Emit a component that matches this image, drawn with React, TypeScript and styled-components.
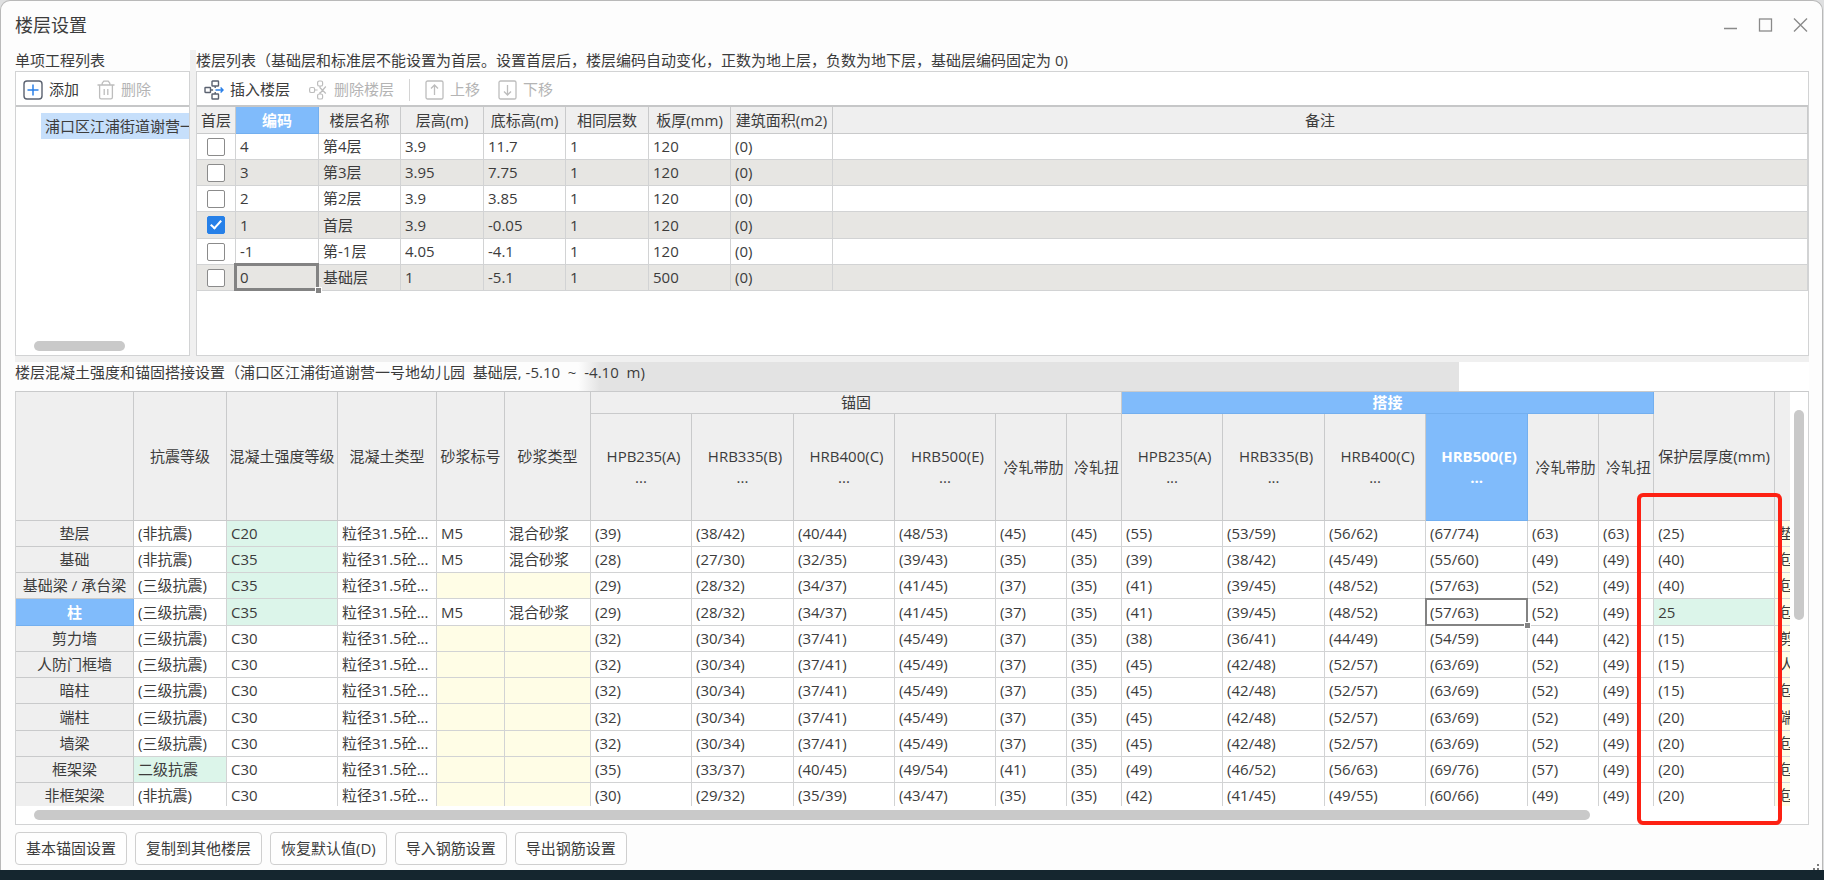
import React from "react";
import styled, { createGlobalStyle, css } from "styled-components";

const GlobalStyle = createGlobalStyle`
  *, *::before, *::after { box-sizing: border-box; }
  body {
    margin: 0;
    background: #dfe0e1;
    color: #3c3c3c;
    font: 15px/21px "Open Sans", "Noto Sans CJK SC", sans-serif;
  }
  button, input { font: inherit; color: inherit; }
`;

const line = "#d2d3d4";
const headLine = "#c9cacb";
const accent = "#80bbfb";

/* ---------- window frame ---------- */

const Screen = styled.div`
  display: flex;
  flex-direction: column;
  min-height: 100vh;
`;

const Dialog = styled.main`
  position: relative;
  flex: 1;
  display: flex;
  flex-direction: column;
  margin-right: 1px;
  padding: 0 13px 5px 14px;
  background: #fdfdfd;
  border: 1px solid #b9b9b9;
  border-bottom: 0;
  border-radius: 10px 10px 0 0;
`;

const Desktop = styled.div`
  height: 10px;
  background: #15262f;
`;

const TitleBar = styled.header`
  display: flex;
  align-items: center;
  justify-content: space-between;
  height: 49px;
`;

const Title = styled.h1`
  margin: 0;
  font-size: 18px;
  font-weight: 400;
`;

const WindowButtons = styled.div`
  display: flex;
  gap: 20px;
  padding-right: 1px;
`;

const WindowButton = styled.button`
  display: flex;
  padding: 0;
  border: 0;
  background: none;
  color: #8a8a8a;
`;

const Grip = styled.svg`
  position: absolute;
  right: 2px;
  bottom: 0;
`;

/* ---------- upper area ---------- */

const Upper = styled.section`
  display: flex;
`;

const Side = styled.div`
  width: 175px;
  flex: none;
`;

const Main = styled.div`
  flex: 1;
  min-width: 0;
`;

const Splitter = styled.div<{ $row?: boolean }>`
  flex: none;
  background: #f0f0f0;
  ${(p) => (p.$row ? "height: 6px;" : "width: 6px;")}
`;

const Caption = styled.h2`
  margin: 0;
  font-size: 15px;
  font-weight: 400;
  white-space: nowrap;
`;

const GridCaption = styled(Caption)`
  height: 29px;
  background: linear-gradient(to right, #fdfdfd 31.4%, #e3e3e3 32.6%, #e3e3e3 80.5%, #fff 80.5%);
`;

const Panel = styled.div`
  display: flex;
  flex-direction: column;
  height: 285px;
  background: #fff;
  border: 1px solid ${line};
`;

const Toolbar = styled.div`
  display: flex;
  align-items: center;
  gap: 18px;
  flex: none;
  height: 35px;
  padding: 2px 7px 0;
  border-bottom: 2px solid #c6c7c8;
`;

const ToolButton = styled.button`
  display: flex;
  align-items: center;
  gap: 6px;
  padding: 0;
  border: 0;
  background: none;
  white-space: nowrap;
  &:disabled { color: #b4b4b4; }
  svg { flex: none; }
`;

const Divider = styled.span`
  width: 1px;
  height: 22px;
  margin: 0 -3px;
  background: #d4d4d4;
`;

const Tree = styled.ul`
  flex: 1;
  margin: 0;
  padding: 6px 0 0 25px;
  list-style: none;
  overflow: hidden;
`;

const TreeItem = styled.li`
  padding-left: 4px;
  line-height: 26px;
  white-space: nowrap;
  background: #c6dffb;
`;

const Thumb = styled.div`
  background: #c9c9c9;
  border-radius: 5px;
`;

const TreeThumb = styled(Thumb)`
  width: 91px;
  height: 10px;
  margin: 0 0 4px 18px;
`;

/* ---------- tables ---------- */

const Table = styled.table`
  table-layout: fixed;
  border-collapse: separate;
  border-spacing: 0;
  white-space: nowrap;
`;

const FloorTable = styled(Table)`
  width: 100%;
`;

const RebarTable = styled(Table)`
  width: 1860px;
`;

const Col = styled.col<{ $w?: number }>`
  ${(p) => (p.$w ? `width: ${p.$w}px;` : "")}
`;

const selectedHead = css`
  background: ${accent};
  border-color: #73afef;
  color: #fff;
  font-weight: 700;
`;

const Head = styled.th<{ $on?: boolean; $h: number }>`
  height: ${(p) => p.$h}px;
  padding: 0;
  background: #efefef;
  border: solid ${headLine};
  border-width: 0 1px 1px 0;
  font-weight: 400;
  text-align: center;
  ${(p) => p.$on && selectedHead}
`;

const SubHead = styled(Head)`
  padding-left: 5px;
`;

const Dots = styled.span`
  display: block;
  margin-left: -5px;
`;

const Body = styled.tbody`
  tr { height: 26px; }
  tr:nth-child(4n) { height: 27px; }
`;

const FloorRow = styled.tr`
  &:nth-child(even) { background: #e7e6e3; }
`;

const RowHead = styled.th<{ $on?: boolean }>`
  padding: 0;
  background: #efefef;
  border: solid ${headLine};
  border-width: 0 1px 1px 0;
  font-weight: 400;
  ${(p) => p.$on && selectedHead}
`;

type Tint = "green" | "yellow" | undefined;

const Cell = styled.td<{ $tint?: Tint; $current?: number; $clip?: boolean }>`
  padding: 0 0 0 4px;
  line-height: 21px;
  border: solid ${line};
  border-width: 0 1px 1px 0;
  ${(p) => p.$clip && "overflow: hidden;"}
  ${(p) => p.$tint === "green" && "background: #dcf5ea;"}
  ${(p) => p.$tint === "yellow" && "background: #fffde6;"}
  ${(p) =>
    p.$current &&
    css`
      position: relative;
      &::before {
        content: "";
        position: absolute;
        inset: -${p.$current - 1}px -1px -1px -${p.$current - 1}px;
        border: ${p.$current}px solid #838383;
      }
      &::after {
        content: "";
        position: absolute;
        z-index: 1;
        right: -4px;
        bottom: -4px;
        width: 7px;
        height: 7px;
        background: #838383;
        border: 1px solid #fff;
      }
    `}
`;

const CheckCell = styled(Cell)`
  padding: 0;
`;

const Check = styled.input`
  appearance: none;
  display: grid;
  place-content: center;
  width: 18px;
  height: 18px;
  margin: 0 auto;
  background: #fff;
  border: 1px solid #8b8b8b;
  border-radius: 2px;
  &:checked {
    background: #2680e8;
    border-color: #2680e8;
  }
  &:checked::before {
    content: "";
    width: 6px;
    height: 11px;
    margin-bottom: 3px;
    border: solid #fff;
    border-width: 0 2px 2px 0;
    transform: rotate(42deg);
  }
`;

/* ---------- lower area ---------- */

const GridPanel = styled.section`
  position: relative;
  flex: 1 0 0;
  min-height: 434px;
  display: grid;
  grid-template: minmax(0, 1fr) 18px / minmax(0, 1fr) 18px;
  background: #fff;
  border: 1px solid ${line};
  border-top-color: ${headLine};
`;

const Viewport = styled.div`
  overflow: auto;
  scrollbar-width: none;
  height: 0;
  min-height: 100%;
`;

const VerticalThumb = styled(Thumb)`
  width: 10px;
  height: 210px;
  margin: 18px 0 0 4px;
`;

const HorizontalThumb = styled(Thumb)`
  height: 10px;
  margin: 4px 200px 0 18px;
`;

const Highlight = styled.div`
  position: absolute;
  z-index: 2;
  left: 1621px;
  top: 101px;
  bottom: -1px;
  width: 145px;
  border: 4px solid #fd2113;
  border-radius: 6px;
  pointer-events: none;
`;

const Footer = styled.footer`
  display: flex;
  gap: 8px;
  margin-top: 7px;
`;

const FooterButton = styled.button`
  height: 33px;
  padding: 0 10px;
  background: #fefefe;
  border: 1px solid #cfcfcf;
  border-radius: 4px;
`;

/* ---------- icons ---------- */

const AddIcon = () => (
  <svg width="20" height="20" viewBox="0 0 20 20" fill="none">
    <rect x="1" y="1" width="18" height="18" rx="3" stroke="#5b6270" strokeWidth="1.4" />
    <path d="M10 4.5v11M4.5 10h11" stroke="#2b80e8" strokeWidth="1.5" />
  </svg>
);

const TrashIcon = () => (
  <svg width="18" height="20" viewBox="0 0 18 20" fill="none" stroke="#bdbdbd" strokeWidth="1.3">
    <path d="M.5 5h17M5.2 5V3.2L6.8 1.2h4.4l1.6 2V5M2.6 5v12.2c0 1 .6 1.6 1.6 1.6h9.6c1 0 1.6-.6 1.6-1.6V5M7.2 9v6M10.8 9v6" />
  </svg>
);

const InsertIcon = () => (
  <svg width="20" height="20" viewBox="0 0 20 20" fill="none" stroke="#5b6270" strokeWidth="1.4">
    <rect x="8" y="1" width="6.5" height="5" rx=".6" />
    <rect x="1" y="7.5" width="5.5" height="5" rx=".6" />
    <rect x="8" y="14" width="6.5" height="5" rx=".6" />
    <path d="M6.5 10h2.6M11.2 6v2M11.2 12v2" />
    <path d="M11.5 10H19M16.6 7.6 19 10l-2.4 2.4" stroke="#2b80e8" />
  </svg>
);

const RemoveIcon = () => (
  <svg width="20" height="20" viewBox="0 0 20 20" fill="none" stroke="#bdbdbd" strokeWidth="1.2">
    <rect x="9.6" y="1" width="5" height="5" rx="1.6" />
    <rect x="1.6" y="7.5" width="5" height="5" rx="1.6" />
    <rect x="9.6" y="14" width="5" height="5" rx="1.6" />
    <path d="M6.6 10h3M12 6v2M12 12v2M11.8 7.5l6 6M17.8 6.5l-6 7" />
  </svg>
);

const MoveIcon = ({ down }: { down?: boolean }) => (
  <svg width="19" height="20" viewBox="0 0 19 20" fill="none" stroke="#bdbdbd" strokeWidth="1.3">
    <rect x="1" y="1" width="17" height="18" rx="1.6" />
    <path d={down ? "M9.5 5v10M6 11.5l3.5 3.5 3.5-3.5" : "M9.5 15V5M6 8.5 9.5 5 13 8.5"} />
  </svg>
);

/* ---------- data ---------- */

const floorColumns = [
  { name: "首层", w: 39 },
  { name: "编码", w: 83 },
  { name: "楼层名称", w: 82 },
  { name: "层高(m)", w: 83 },
  { name: "底标高(m)", w: 82 },
  { name: "相同层数", w: 83 },
  { name: "板厚(mm)", w: 82 },
  { name: "建筑面积(m2)", w: 102 },
  { name: "备注" },
];

const floors = [
  ["4", "第4层", "3.9", "11.7", "1", "120", "(0)", ""],
  ["3", "第3层", "3.95", "7.75", "1", "120", "(0)", ""],
  ["2", "第2层", "3.9", "3.85", "1", "120", "(0)", ""],
  ["1", "首层", "3.9", "-0.05", "1", "120", "(0)", ""],
  ["-1", "第-1层", "4.05", "-4.1", "1", "120", "(0)", ""],
  ["0", "基础层", "1", "-5.1", "1", "500", "(0)", ""],
];

const rebarWidths = [118, 93, 111, 99, 68, 86, 101, 102, 101, 101, 71, 55, 101, 102, 101, 102, 71, 55, 121, 116];
const leadHeads = ["", "抗震等级", "混凝土强度等级", "混凝土类型", "砂浆标号", "砂浆类型"];
const barHeads = ["HPB235(A)", "HRB335(B)", "HRB400(C)", "HRB500(E)", "冷轧带肋", "冷轧扭"];

type Member = {
  name: string;
  seismic: string;
  grade: string;
  mortar?: boolean;
  green?: number[];
  values: string;
  note: string;
};

const members: Member[] = [
  { name: "垫层", seismic: "(非抗震)", grade: "C20", mortar: true, green: [2], values: "(39) (38/42) (40/44) (48/53) (45) (45) (55) (53/59) (56/62) (67/74) (63) (63) (25)", note: "垫" },
  { name: "基础", seismic: "(非抗震)", grade: "C35", mortar: true, green: [2], values: "(28) (27/30) (32/35) (39/43) (35) (35) (39) (38/42) (45/49) (55/60) (49) (49) (40)", note: "包" },
  { name: "基础梁 / 承台梁", seismic: "(三级抗震)", grade: "C35", green: [2], values: "(29) (28/32) (34/37) (41/45) (37) (35) (41) (39/45) (48/52) (57/63) (52) (49) (40)", note: "包" },
  { name: "柱", seismic: "(三级抗震)", grade: "C35", mortar: true, green: [2, 18], values: "(29) (28/32) (34/37) (41/45) (37) (35) (41) (39/45) (48/52) (57/63) (52) (49) 25", note: "包" },
  { name: "剪力墙", seismic: "(三级抗震)", grade: "C30", values: "(32) (30/34) (37/41) (45/49) (37) (35) (38) (36/41) (44/49) (54/59) (44) (42) (15)", note: "剪" },
  { name: "人防门框墙", seismic: "(三级抗震)", grade: "C30", values: "(32) (30/34) (37/41) (45/49) (37) (35) (45) (42/48) (52/57) (63/69) (52) (49) (15)", note: "人" },
  { name: "暗柱", seismic: "(三级抗震)", grade: "C30", values: "(32) (30/34) (37/41) (45/49) (37) (35) (45) (42/48) (52/57) (63/69) (52) (49) (15)", note: "包" },
  { name: "端柱", seismic: "(三级抗震)", grade: "C30", values: "(32) (30/34) (37/41) (45/49) (37) (35) (45) (42/48) (52/57) (63/69) (52) (49) (20)", note: "端" },
  { name: "墙梁", seismic: "(三级抗震)", grade: "C30", values: "(32) (30/34) (37/41) (45/49) (37) (35) (45) (42/48) (52/57) (63/69) (52) (49) (20)", note: "包" },
  { name: "框架梁", seismic: "二级抗震", grade: "C30", green: [1], values: "(35) (33/37) (40/45) (49/54) (41) (35) (49) (46/52) (56/63) (69/76) (57) (49) (20)", note: "包" },
  { name: "非框架梁", seismic: "(非抗震)", grade: "C30", values: "(30) (29/32) (35/39) (43/47) (35) (35) (42) (41/45) (49/55) (60/66) (49) (49) (20)", note: "包" },
];

const footerButtons = ["基本锚固设置", "复制到其他楼层", "恢复默认值(D)", "导入钢筋设置", "导出钢筋设置"];

/* ---------- parts ---------- */

const Floors = () => (
  <FloorTable>
    <colgroup>
      {floorColumns.map((c) => (
        <Col key={c.name} $w={c.w} />
      ))}
    </colgroup>
    <thead>
      <tr>
        {floorColumns.map((c) => (
          <Head key={c.name} scope="col" $h={27} $on={c.name === "编码"}>
            {c.name}
          </Head>
        ))}
      </tr>
    </thead>
    <Body>
      {floors.map((row) => (
        <FloorRow key={row[0]}>
          <CheckCell>
            <Check type="checkbox" aria-label={`${row[1]} 首层`} defaultChecked={row[0] === "1"} />
          </CheckCell>
          {row.map((text, i) => (
            <Cell key={i} $current={row[0] === "0" && i === 0 ? 3 : undefined}>
              {text}
            </Cell>
          ))}
        </FloorRow>
      ))}
    </Body>
  </FloorTable>
);

const BarHeads = ({ current }: { current?: string }) => (
  <>
    {barHeads.map((name) => (
      <SubHead key={name} scope="col" $h={107} $on={name === current}>
        {name}
        {name.startsWith("H") && <Dots>...</Dots>}
      </SubHead>
    ))}
  </>
);

const MemberRow = ({ m }: { m: Member }) => {
  const cells = [
    m.seismic,
    m.grade,
    "粒径31.5砼...",
    m.mortar ? "M5" : "",
    m.mortar ? "混合砂浆" : "",
    ...m.values.split(" "),
    m.note,
  ];
  const tint = (col: number): Tint => {
    if (m.green?.includes(col)) return "green";
    if (col === 19 || (!m.mortar && (col === 4 || col === 5))) return "yellow";
    return undefined;
  };
  return (
    <tr>
      <RowHead scope="row" $on={m.name === "柱"}>
        {m.name}
      </RowHead>
      {cells.map((text, i) => (
        <Cell
          key={i}
          $tint={tint(i + 1)}
          $clip={i === 18}
          $current={m.name === "柱" && i === 14 ? 2 : undefined}
        >
          {text}
        </Cell>
      ))}
    </tr>
  );
};

const Rebar = () => (
  <RebarTable>
    <colgroup>
      {rebarWidths.map((w, i) => (
        <Col key={i} $w={w} />
      ))}
    </colgroup>
    <thead>
      <tr>
        {leadHeads.map((name) => (
          <Head key={name} rowSpan={2} scope="col" $h={128}>
            {name}
          </Head>
        ))}
        <Head colSpan={6} scope="colgroup" $h={21}>
          锚固
        </Head>
        <Head colSpan={6} scope="colgroup" $h={21} $on>
          搭接
        </Head>
        <Head rowSpan={2} scope="col" $h={128}>
          保护层厚度(mm)
        </Head>
        <Head rowSpan={2} $h={128} />
      </tr>
      <tr>
        <BarHeads />
        <BarHeads current="HRB500(E)" />
      </tr>
    </thead>
    <Body>
      {members.map((m) => (
        <MemberRow key={m.name} m={m} />
      ))}
    </Body>
  </RebarTable>
);

export default function App() {
  return (
    <Screen>
      <GlobalStyle />
      <Dialog>
        <TitleBar>
          <Title>楼层设置</Title>
          <WindowButtons>
            <WindowButton aria-label="最小化">
              <svg width="15" height="15" viewBox="0 0 15 15" stroke="currentColor" strokeWidth="1.5">
                <path d="M1 10.5h13" />
              </svg>
            </WindowButton>
            <WindowButton aria-label="最大化">
              <svg width="15" height="15" viewBox="0 0 15 15" fill="none" stroke="currentColor" strokeWidth="1.3">
                <rect x="1.5" y="1" width="12" height="12" />
              </svg>
            </WindowButton>
            <WindowButton aria-label="关闭">
              <svg width="15" height="15" viewBox="0 0 15 15" stroke="currentColor" strokeWidth="1.4">
                <path d="M1 .5l13 13M14 .5l-13 13" />
              </svg>
            </WindowButton>
          </WindowButtons>
        </TitleBar>

        <Upper>
          <Side>
            <Caption>单项工程列表</Caption>
            <Panel>
              <Toolbar>
                <ToolButton>
                  <AddIcon />
                  添加
                </ToolButton>
                <ToolButton disabled>
                  <TrashIcon />
                  删除
                </ToolButton>
              </Toolbar>
              <Tree>
                <TreeItem>浦口区江浦街道谢营一</TreeItem>
              </Tree>
              <TreeThumb />
            </Panel>
          </Side>
          <Splitter />
          <Main>
            <Caption>
              楼层列表（基础层和标准层不能设置为首层。设置首层后，楼层编码自动变化，正数为地上层，负数为地下层，基础层编码固定为 0)
            </Caption>
            <Panel>
              <Toolbar>
                <ToolButton>
                  <InsertIcon />
                  插入楼层
                </ToolButton>
                <ToolButton disabled>
                  <RemoveIcon />
                  删除楼层
                </ToolButton>
                <Divider />
                <ToolButton disabled>
                  <MoveIcon />
                  上移
                </ToolButton>
                <ToolButton disabled>
                  <MoveIcon down />
                  下移
                </ToolButton>
              </Toolbar>
              <Floors />
            </Panel>
          </Main>
        </Upper>

        <Splitter $row />
        <GridCaption>
          楼层混凝土强度和锚固搭接设置（浦口区江浦街道谢营一号地幼儿园&nbsp; 基础层, -5.10&nbsp; ~&nbsp; -4.10&nbsp; m)
        </GridCaption>

        <GridPanel>
          <Viewport>
            <Rebar />
          </Viewport>
          <VerticalThumb />
          <HorizontalThumb />
          <Highlight />
        </GridPanel>

        <Footer>
          {footerButtons.map((name) => (
            <FooterButton key={name}>{name}</FooterButton>
          ))}
        </Footer>
        <Grip width="8" height="6" viewBox="0 0 8 6" fill="#7a7a7a">
          <path d="M5 0h2v2H5zM5 4h2v2H5zM1 4h2v2H1z" />
        </Grip>
      </Dialog>
      <Desktop />
    </Screen>
  );
}
